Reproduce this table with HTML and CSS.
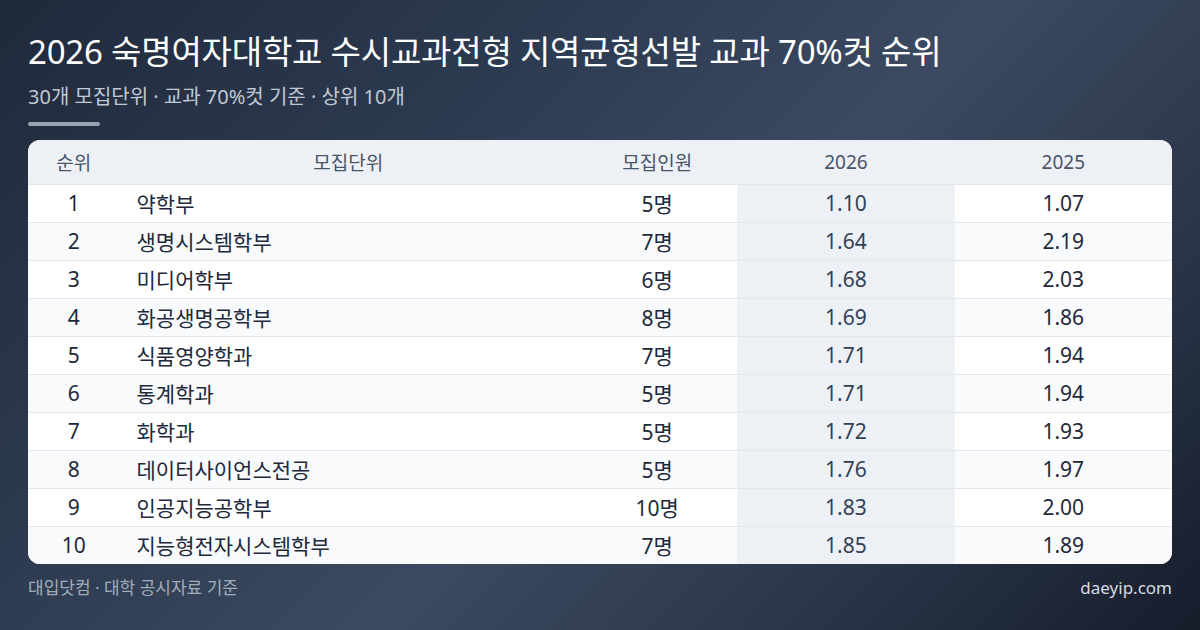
FILE: index.html
```html
<!DOCTYPE html>
<html lang="ko">
<head>
<meta charset="utf-8">
<link rel="stylesheet" href="styles.css">
</head>
<body>
<div class="page">
  <header class="head">
    <h1 class="title">2026 숙명여자대학교 수시교과전형 지역균형선발 교과 70%컷 순위</h1>
    <p class="sub">30개 모집단위 · 교과 70%컷 기준 · 상위 10개</p>
    <div class="bar"></div>
  </header>
  <div class="card">
    <table class="tbl">
      <colgroup>
        <col class="c1"><col class="c2"><col class="c3"><col class="c4"><col class="c5">
      </colgroup>
      <thead>
        <tr><th>순위</th><th>모집단위</th><th>모집인원</th><th>2026</th><th>2025</th></tr>
      </thead>
      <tbody>
        <tr><td>1</td><td class="name">약학부</td><td>5명</td><td class="hl">1.10</td><td>1.07</td></tr>
        <tr><td>2</td><td class="name">생명시스템학부</td><td>7명</td><td class="hl">1.64</td><td>2.19</td></tr>
        <tr><td>3</td><td class="name">미디어학부</td><td>6명</td><td class="hl">1.68</td><td>2.03</td></tr>
        <tr><td>4</td><td class="name">화공생명공학부</td><td>8명</td><td class="hl">1.69</td><td>1.86</td></tr>
        <tr><td>5</td><td class="name">식품영양학과</td><td>7명</td><td class="hl">1.71</td><td>1.94</td></tr>
        <tr><td>6</td><td class="name">통계학과</td><td>5명</td><td class="hl">1.71</td><td>1.94</td></tr>
        <tr><td>7</td><td class="name">화학과</td><td>5명</td><td class="hl">1.72</td><td>1.93</td></tr>
        <tr><td>8</td><td class="name">데이터사이언스전공</td><td>5명</td><td class="hl">1.76</td><td>1.97</td></tr>
        <tr><td>9</td><td class="name">인공지능공학부</td><td>10명</td><td class="hl">1.83</td><td>2.00</td></tr>
        <tr><td>10</td><td class="name">지능형전자시스템학부</td><td>7명</td><td class="hl">1.85</td><td>1.89</td></tr>
      </tbody>
    </table>
  </div>
  <footer class="foot">
    <span>대입닷컴 · 대학 공시자료 기준</span>
    <span class="site">daeyip.com</span>
  </footer>
</div>
</body>
</html>
```

FILE: styles.css
```css
* { box-sizing: border-box; }
html, body {
  margin: 0;
  padding: 0;
  width: 1200px;
  height: 630px;
  overflow: hidden;
}
body {
  font-family: "Noto Sans", "Noto Sans CJK KR", sans-serif;
  background: linear-gradient(135deg, #1f293a 0%, #2c3a50 30%, #3b4a62 55%, #2a3548 78%, #161d2b 100%);
  color: #1e293b;
}
.page {
  width: 1200px;
  height: 630px;
  padding: 28px 28px 0 28px;
  display: flex;
  flex-direction: column;
}
.head { display: flex; flex-direction: column; }
.title {
  margin: 0;
  font-size: 33px;
  font-weight: 400;
  color: #ffffff;
  line-height: 48px;
  letter-spacing: -0.2px;
}
.sub {
  margin: 8px 0 0 0;
  font-size: 20px;
  line-height: 26px;
  color: #c0c8d4;
  font-weight: 400;
}
.bar {
  margin-top: 12px;
  width: 72px;
  height: 4px;
  border-radius: 2px;
  background: #9aa3af;
}
.card {
  margin-top: 14px;
  background: #ffffff;
  border-radius: 12px;
  overflow: hidden;
}
.tbl {
  width: 100%;
  border-collapse: collapse;
  table-layout: fixed;
}
.c1 { width: 8%; }
.c2 { width: 40%; }
.c3 { width: 14%; }
.c4 { width: 19%; }
.c5 { width: 19%; }
.tbl th {
  height: 44px;
  background: #edf0f5;
  color: #475569;
  font-weight: 400;
  font-size: 19px;
  text-align: center;
  padding: 0;
  border-bottom: 1px solid #e2e8f0;
}
.tbl td {
  height: 38px;
  padding: 0;
  text-align: center;
  font-size: 21px;
  color: #1e293b;
  border-top: 1px solid #e2e8f0;
}
.tbl tbody tr:first-child td { border-top: none; }
.tbl tbody tr:nth-child(even) td { background: #f8fafc; }
.tbl td.name { text-align: left; padding-left: 17px; }
.tbl tbody tr td.hl { background: #edf0f5; color: #334155; }
.foot {
  margin-top: 12px;
  display: flex;
  justify-content: space-between;
  font-size: 17px;
  line-height: 24px;
  color: #a3adba;
}
.foot .site { color: #d5dbe3; }
```
